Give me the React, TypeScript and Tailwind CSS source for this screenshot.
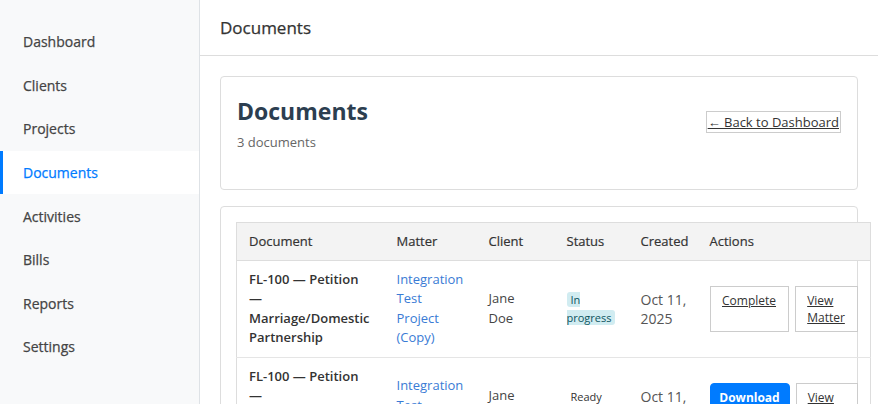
import React from "react";

const navItems = ["Dashboard", "Clients", "Projects", "Documents", "Activities", "Bills", "Reports", "Settings"];

const Sidebar = () => (
  <aside className="w-[200px] shrink-0 bg-[#f8f9fa] border-r border-[#dee2e6] pt-5">
    {navItems.map((item) => {
      const active = item === "Documents";
      return (
        <div
          key={item}
          className={
            active
              ? "h-[43.6px] flex items-center pl-5 border-l-[3px] border-[#007bff] bg-white text-[#007bff] text-[14px] font-medium [-webkit-text-stroke:0.25px]"
              : "h-[43.6px] flex items-center pl-5 border-l-[3px] border-transparent text-[#444] text-[14px] font-medium [-webkit-text-stroke:0.25px]"
          }
        >
          {item}
        </div>
      );
    })}
  </aside>
);

const Badge = ({ children, className }: { children: React.ReactNode; className: string }) => (
  <span className={`px-1 rounded-[3px] text-[11px] leading-[16.5px] ${className}`}>{children}</span>
);

const ActionButton = ({ label, width, primary }: { label: React.ReactNode; width: string; primary?: boolean }) => (
  <button
    className={
      primary
        ? `${width} shrink-0 flex justify-center items-start px-3 py-[5px] rounded-[4px] bg-[#007bff] border border-[#007bff] text-white text-[12px] leading-[17px] font-bold`
        : `${width} shrink-0 flex justify-center items-start px-3 py-[5px] bg-white border border-[#ccc] text-[#333] text-[12px] leading-[17px] underline`
    }
  >
    <span className="text-left">{label}</span>
  </button>
);

const rows = [
  {
    matter: "Integration Test Project (Copy)",
    status: (
      <Badge className="bg-[#d1ecf1] text-[#0c5460]">In progress</Badge>
    ),
    actions: [
      { label: "Complete", width: "w-[79px]", primary: false },
      { label: "View Matter", width: "w-[63px]", primary: false },
    ],
  },
  {
    matter: "Integration Test Project",
    status: (
      <Badge className="bg-white text-[#333]">
        Ready
        <br />
        to file
      </Badge>
    ),
    actions: [
      { label: "Download", width: "w-[80px]", primary: true },
      { label: "View Matter", width: "w-[62px]", primary: false },
    ],
  },
];

export default function App() {
  return (
    <div className="h-[404px] overflow-hidden flex bg-white font-['Open_Sans',sans-serif] text-[#333]">
      <Sidebar />
      <main className="flex-1 min-w-0">
        <header className="h-[56px] border-b border-[#ddd] flex items-center px-5 text-[17px] font-medium text-[#333] [-webkit-text-stroke:0.25px]">
          Documents
        </header>
        <div className="p-5 flex flex-col gap-4">
          <section className="h-[114px] border border-[#ddd] rounded-[4px] px-4 pt-4 flex justify-between items-start">
            <div>
              <h1 className="text-[23px] leading-[36px] font-bold text-[#2c3e50]">Documents</h1>
              <p className="mt-1 text-[13px] leading-[19.5px] text-[#666]">3 documents</p>
            </div>
            <a className="mt-[18px] border border-[#ccc] px-px text-[13px] leading-[20px] text-[#333] underline whitespace-nowrap">
              ← Back to Dashboard
            </a>
          </section>

          <section className="border border-[#ddd] rounded-[4px] p-[15px]">
            <table className="w-[634px] table-fixed border-collapse border border-[#ddd] text-[13px] leading-[19.5px]">
              <colgroup>
                <col className="w-[148px]" />
                <col className="w-[92px]" />
                <col className="w-[78px]" />
                <col className="w-[74px]" />
                <col className="w-[69px]" />
                <col className="w-[173px]" />
              </colgroup>
              <thead>
                <tr className="bg-[#f3f3f3] border-b border-[#ddd]">
                  {["Document", "Matter", "Client", "Status", "Created", "Actions"].map((h) => (
                    <th key={h} className="px-3 py-[8.5px] text-left font-medium text-[#333] [-webkit-text-stroke:0.2px]">
                      {h}
                    </th>
                  ))}
                </tr>
              </thead>
              <tbody>
                {rows.map((row, i) => (
                  <tr key={i} className="border-b border-[#e5e5e5] align-middle">
                    <td className="px-3 py-[9px] font-semibold text-[#333]">
                      FL-100 — Petition
                      <br />—<br />
                      Marriage/Domestic
                      <br />
                      Partnership
                    </td>
                    <td className="px-3 py-[9px] text-[#3a7bd5]">{row.matter}</td>
                    <td className="px-3 py-[9px] text-[#444]">
                      Jane
                      <br />
                      Doe
                    </td>
                    <td className="px-3 py-[9px] leading-[16.5px]">{row.status}</td>
                    <td className="px-3 py-[9px] text-[14px] leading-[19px] text-[#555] whitespace-nowrap">
                      Oct 11,
                      <br />
                      2025
                    </td>
                    <td className="px-3 py-[9px]">
                      <div className="flex gap-[6px] h-[46px]">
                        {row.actions.map((a) => (
                          <ActionButton key={a.label} label={a.label} width={a.width} primary={a.primary} />
                        ))}
                      </div>
                    </td>
                  </tr>
                ))}
              </tbody>
            </table>
          </section>
        </div>
      </main>
    </div>
  );
}
